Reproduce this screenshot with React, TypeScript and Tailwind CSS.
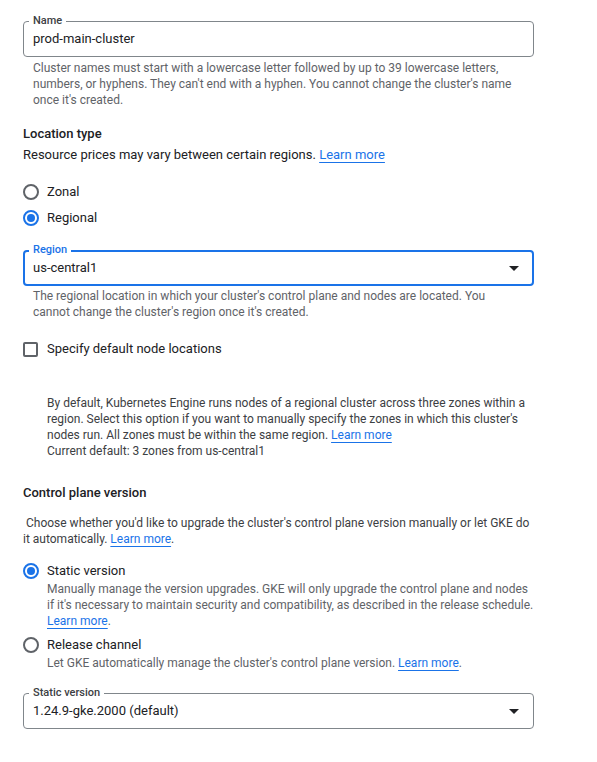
import type { ReactNode } from "react";

function Link({ children }: { children: ReactNode }) {
  return <span className="text-[#1a73e8] underline underline-offset-[3px] decoration-[#1a73e8]">{children}</span>;
}

function Radio({ checked }: { checked?: boolean }) {
  return (
    <span
      className={
        "flex size-4 shrink-0 items-center justify-center rounded-full border-2 " +
        (checked ? "border-[#1a73e8]" : "border-[#5f6368]")
      }
    >
      {checked && <span className="size-2 rounded-full bg-[#1a73e8]" />}
    </span>
  );
}

function Caret() {
  return (
    <svg width="10" height="5" viewBox="0 0 10 5" className="shrink-0">
      <path d="M0 0h10L5 5z" fill="#202124" />
    </svg>
  );
}

function OutlinedField({
  label,
  value,
  focused,
  select,
}: {
  label: string;
  value: string;
  focused?: boolean;
  select?: boolean;
}) {
  return (
    <div
      className={
        "relative flex h-9 items-center justify-between rounded-[4px] " +
        (focused ? "border-2 border-[#1a73e8] pl-[8px] pr-[13px]" : "border border-[#80868b] pl-[9px] pr-[14px]")
      }
    >
      <span
        className={
          "absolute bg-white px-[4px] text-[11px] font-medium leading-[14px] " +
          (focused ? "left-[4px] top-[-9px] text-[#1a73e8]" : "left-[5px] top-[-8px] text-[#3c4043]")
        }
      >
        {label}
      </span>
      <span className="text-[13px] leading-5 text-[#202124]">{value}</span>
      {select && <Caret />}
    </div>
  );
}

export default function App() {
  return (
    <div className="min-h-[762px] bg-white font-['Roboto','Liberation_Sans',sans-serif] text-[#202124]">
      <div className="w-[557px] px-[23px] pt-[21px]">
        <OutlinedField label="Name" value="prod-main-cluster" />
        <p className="mt-[3px] px-[10px] text-[12px] leading-4 text-[#5f6368]">
          Cluster names must start with a lowercase letter followed by up to 39 lowercase letters,
          <br />
          numbers, or hyphens. They can't end with a hyphen. You cannot change the cluster's name
          <br />
          once it's created.
        </p>

        <h3 className="mt-[16px] text-[13px] font-medium leading-5">Location type</h3>
        <p className="mt-[1px] text-[13px] leading-5">
          Resource prices may vary between certain regions. <Link>Learn more</Link>
        </p>

        <div className="mt-[14px]">
          <label className="flex h-[26px] items-center gap-2">
            <Radio />
            <span className="text-[13px]">Zonal</span>
          </label>
          <label className="flex h-[26px] items-center gap-2">
            <Radio checked />
            <span className="text-[13px]">Regional</span>
          </label>
        </div>

        <div className="mt-[19px]">
          <OutlinedField label="Region" value="us-central1" focused select />
        </div>
        <p className="mt-[2px] px-[10px] text-[12px] leading-4 text-[#5f6368]">
          The regional location in which your cluster's control plane and nodes are located. You
          <br />
          cannot change the cluster's region once it's created.
        </p>

        <label className="mt-[19px] flex h-5 items-center gap-[9px]">
          <span className="size-[15px] shrink-0 rounded-[2px] border-2 border-[#5f6368]" />
          <span className="text-[13px]">Specify default node locations</span>
        </label>

        <p className="mt-[36px] pl-[24px] text-[12px] leading-4 text-[#3c4043]">
          By default, Kubernetes Engine runs nodes of a regional cluster across three zones within a
          <br />
          region. Select this option if you want to manually specify the zones in which this cluster's
          <br />
          nodes run. All zones must be within the same region. <Link>Learn more</Link>
          <br />
          Current default: 3 zones from us-central1
        </p>

        <h3 className="mt-[24px] text-[13px] font-medium leading-5">Control plane version</h3>
        <p className="mt-[12px] text-[12px] leading-4 text-[#3c4043]">
          &nbsp;Choose whether you'd like to upgrade the cluster's control plane version manually or let GKE do
          <br />
          it automatically. <Link>Learn more</Link>.
        </p>

        <div className="mt-[14px]">
          <label className="flex h-5 items-center gap-2">
            <Radio checked />
            <span className="text-[13px]">Static version</span>
          </label>
          <p className="pl-[24px] text-[12px] leading-4 text-[#5f6368]">
            Manually manage the version upgrades. GKE will only upgrade the control plane and nodes
            <br />
            if it's necessary to maintain security and compatibility, as described in the release schedule.
            <br />
            <Link>Learn more</Link>.
          </p>
          <label className="mt-[6px] flex h-5 items-center gap-2">
            <Radio />
            <span className="text-[13px]">Release channel</span>
          </label>
          <p className="pl-[24px] text-[12px] leading-4 text-[#5f6368]">
            Let GKE automatically manage the cluster's control plane version. <Link>Learn more</Link>.
          </p>
        </div>

        <div className="mt-[22px]">
          <OutlinedField label="Static version" value="1.24.9-gke.2000 (default)" select />
        </div>
      </div>
    </div>
  );
}
